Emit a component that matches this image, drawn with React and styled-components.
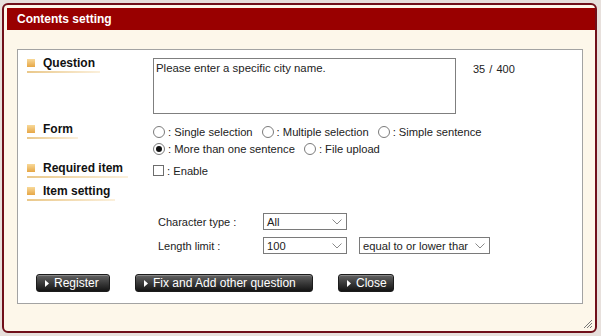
import React from 'react';
import styled, { createGlobalStyle } from 'styled-components';

const GlobalStyle = createGlobalStyle`
  html, body { margin: 0; padding: 0; }
  body {
    background: #e7e0dc;
    font-family: "Liberation Sans", Arial, sans-serif;
    color: #222;
  }
`;

const Page = styled.div`
  width: 601px;
  height: 336px;
  padding: 3px 0 0 2px;
  box-sizing: border-box;
`;

const Dialog = styled.div`
  position: relative;
  width: 595px;
  height: 330px;
  box-sizing: border-box;
  border: 2px solid #70101a;
  border-radius: 6px;
  background: #fdf7ea;
  padding: 3px 0 0 3px;
  display: flex;
  flex-direction: column;
`;

const Header = styled.div`
  height: 22px;
  line-height: 23px;
  background: #990000;
  color: #fff;
  font-weight: bold;
  font-size: 12px;
  padding-left: 10px;
`;

const Panel = styled.div`
  margin: 19px 12px 0 10px;
  border: 1px solid #a3a3a3;
  background: #fff;
  padding: 8px 9px 11px 9px;
`;

const Row = styled.div`
  display: flex;
  align-items: flex-start;
  margin-top: ${p => p.$mt || 0}px;
`;

const LabelCell = styled.div`
  width: 126px;
  flex-shrink: 0;
  display: flex;
  align-items: flex-start;
  margin-top: ${p => p.$mt || 0}px;
`;

const Label = styled.span`
  display: inline-flex;
  align-items: center;
  font-size: 12px;
  font-weight: bold;
  line-height: 12px;
  color: #111;
  padding: 0 5px 4px 0;
  background: linear-gradient(to right, #eac88a, #fbf0dc) left bottom / 100% 2px no-repeat;
`;

const Mark = styled.i`
  width: 8px;
  height: 8px;
  margin-right: 8px;
  background: linear-gradient(#f8d999, #e6a645);
`;

const TextArea = styled.textarea`
  width: 303px;
  height: 56px;
  box-sizing: border-box;
  border: 1px solid #7f7f7f;
  padding: 3px 2px;
  margin: 0;
  font-family: "Liberation Sans", Arial, sans-serif;
  font-size: 11.4px;
  color: #222;
  resize: none;
  outline: none;
`;

const Counter = styled.span`
  margin-left: 17px;
  padding-top: 5px;
  font-size: 11px;
  word-spacing: 1px;
`;

const Options = styled.div`
  display: flex;
  flex-direction: column;
`;

const OptionRow = styled.div`
  height: 17px;
  display: flex;
  align-items: center;
  gap: 9px;
`;

const Option = styled.label`
  display: inline-flex;
  align-items: center;
  gap: 3px;
  font-size: 11.2px;
`;

const Radio = styled.span`
  width: 12px;
  height: 12px;
  box-sizing: border-box;
  border: 1px solid #7b7b7b;
  border-radius: 50%;
  background: #fff;
  display: grid;
  place-items: center;
  &::after {
    content: '';
    width: 6px;
    height: 6px;
    border-radius: 50%;
    background: ${p => (p.$on ? '#111' : 'transparent')};
  }
`;

const Check = styled.span`
  width: 11px;
  height: 11px;
  box-sizing: border-box;
  border: 1px solid #6d6d6d;
  background: #fff;
`;

const Settings = styled.div`
  display: grid;
  grid-template-columns: 93px auto auto;
  justify-content: start;
  align-items: center;
  row-gap: 7px;
  column-gap: 12px;
  margin: 12px 0 0 131px;
  font-size: 11px;
`;

const Select = styled.div`
  width: ${p => p.$w}px;
  height: 17px;
  box-sizing: border-box;
  border: 1px solid #7a7a7a;
  background: #fff;
  display: flex;
  align-items: center;
  justify-content: space-between;
  padding: 0 4px 0 3px;
  font-size: 11.2px;
  white-space: nowrap;
  overflow: hidden;
`;

const Chevron = () => (
  <svg width="10" height="6" viewBox="0 0 10 6" style={{ flexShrink: 0, marginLeft: 2 }}>
    <polyline points="0.5,0.5 5,5 9.5,0.5" fill="none" stroke="#8a8a8a" strokeWidth="1" />
  </svg>
);

const Buttons = styled.div`
  display: flex;
  gap: 25px;
  margin: 20px 0 0 9px;
`;

const Button = styled.button`
  width: ${p => p.$w}px;
  height: 18px;
  box-sizing: border-box;
  border: 1px solid #1c1c1c;
  border-radius: 3px;
  background: linear-gradient(#636363, #3a3a3a 50%, #141414);
  box-shadow: inset 0 1px 0 rgba(255, 255, 255, 0.25);
  color: #fff;
  font-family: "Liberation Sans", Arial, sans-serif;
  font-size: 12px;
  display: flex;
  align-items: center;
  padding: 0 0 0 8px;
  gap: 5px;
  cursor: pointer;
`;

const Arrow = () => (
  <svg width="4" height="7" viewBox="0 0 4 7">
    <polygon points="0,0 4,3.5 0,7" fill="#fff" />
  </svg>
);

const Grip = styled.svg`
  position: absolute;
  right: 3px;
  bottom: 3px;
`;

export default function App() {
  return (
    <Page>
      <GlobalStyle />
      <Dialog>
        <Header>Contents setting</Header>
        <Panel>
          <Row>
            <LabelCell $mt={-1}>
              <Label><Mark />Question</Label>
            </LabelCell>
            <TextArea readOnly defaultValue="Please enter a specific city name." />
            <Counter>35 / 400</Counter>
          </Row>

          <Row $mt={9}>
            <LabelCell>
              <Label><Mark />Form</Label>
            </LabelCell>
            <Options>
              <OptionRow>
                <Option><Radio />: Single selection</Option>
                <Option><Radio />: Multiple selection</Option>
                <Option><Radio />: Simple sentence</Option>
              </OptionRow>
              <OptionRow>
                <Option><Radio $on />: More than one sentence</Option>
                <Option><Radio />: File upload</Option>
              </OptionRow>
            </Options>
          </Row>

          <Row $mt={5}>
            <LabelCell>
              <Label><Mark />Required item</Label>
            </LabelCell>
            <OptionRow>
              <Option><Check />: Enable</Option>
            </OptionRow>
          </Row>

          <Row $mt={6}>
            <LabelCell>
              <Label><Mark />Item setting</Label>
            </LabelCell>
          </Row>

          <Settings>
            <span>Character type :</span>
            <Select $w={84}>All<Chevron /></Select>
            <span />
            <span>Length limit :</span>
            <Select $w={84}>100<Chevron /></Select>
            <Select $w={131}>equal to or lower thar<Chevron /></Select>
          </Settings>

          <Buttons>
            <Button $w={74}><Arrow />Register</Button>
            <Button $w={178}><Arrow />Fix and Add other question</Button>
            <Button $w={56}><Arrow />Close</Button>
          </Buttons>
        </Panel>
        <Grip width="9" height="9" viewBox="0 0 9 9">
          <line x1="1" y1="9" x2="9" y2="1" stroke="#777" />
          <line x1="4" y1="9" x2="9" y2="4" stroke="#777" />
          <line x1="7" y1="9" x2="9" y2="7" stroke="#777" />
        </Grip>
      </Dialog>
    </Page>
  );
}
